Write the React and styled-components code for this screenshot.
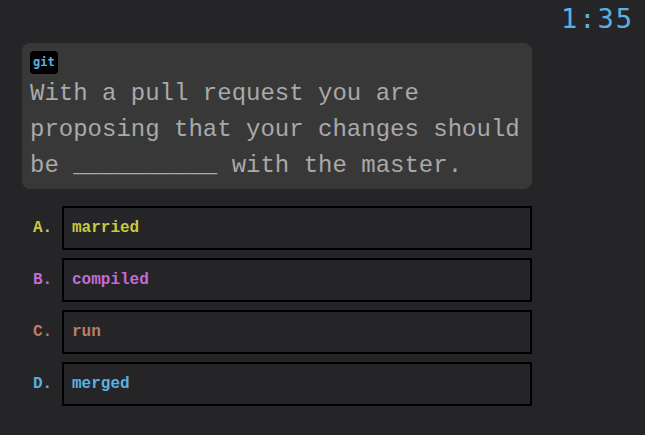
import React from "react";
import styled, { createGlobalStyle } from "styled-components";

const Global = createGlobalStyle`
  html, body { margin: 0; padding: 0; background: #252527; }
  body { width: 645px; height: 435px; overflow: hidden; }
`;

const Page = styled.div`
  display: flex;
  flex-direction: column;
  padding: 0 10px 0 22px;
  font-family: "Liberation Mono", "Courier New", monospace;
`;

const Header = styled.div`
  display: flex;
  justify-content: flex-end;
  height: 43px;
`;

const Timer = styled.div`
  font-family: "DejaVu Sans Mono", monospace;
  font-size: 27px;
  letter-spacing: 2px;
  line-height: 37px;
  color: #5ab2e2;
  margin-right: 1px;
`;

const Card = styled.div`
  width: 510px;
  box-sizing: border-box;
  background: #383838;
  border-radius: 8px;
  padding: 8px 8px 5px 8px;
`;

const Badge = styled.span`
  display: inline-block;
  background: #000;
  color: #5ab2e2;
  border-radius: 4px;
  font-family: "DejaVu Sans Mono", monospace;
  font-size: 12px;
  font-weight: bold;
  line-height: 23px;
  padding: 0 3px;
`;

const Question = styled.div`
  color: #a9a9a9;
  font-size: 24px;
  line-height: 36px;
  margin-top: 2px;
`;

const Options = styled.div`
  display: flex;
  flex-direction: column;
  gap: 8px;
  margin-top: 17px;
  width: 510px;
`;

const Row = styled.div`
  display: flex;
  align-items: center;
`;

const Label = styled.span`
  width: 40px;
  padding-left: 11px;
  box-sizing: border-box;
  color: ${(p) => p.$c};
  font-size: 16px;
  font-weight: bold;
`;

const Box = styled.div`
  flex: 1;
  height: 44px;
  box-sizing: border-box;
  border: 2px solid #000;
  display: flex;
  align-items: center;
  padding-left: 8px;
  color: ${(p) => p.$c};
  font-size: 16px;
  font-weight: bold;
`;

const options = [
  { k: "A.", t: "married", c: "#c9c93e" },
  { k: "B.", t: "compiled", c: "#c46ad8" },
  { k: "C.", t: "run", c: "#bd7d66" },
  { k: "D.", t: "merged", c: "#5ab2e2" },
];

export default function App() {
  return (
    <>
      <Global />
      <Page>
        <Header>
          <Timer>1:35</Timer>
        </Header>
        <Card>
          <Badge>git</Badge>
          <Question>
            With a pull request you are proposing that your changes should be __________ with the master.
          </Question>
        </Card>
        <Options>
          {options.map((o) => (
            <Row key={o.k}>
              <Label $c={o.c}>{o.k}</Label>
              <Box $c={o.c}>{o.t}</Box>
            </Row>
          ))}
        </Options>
      </Page>
    </>
  );
}
